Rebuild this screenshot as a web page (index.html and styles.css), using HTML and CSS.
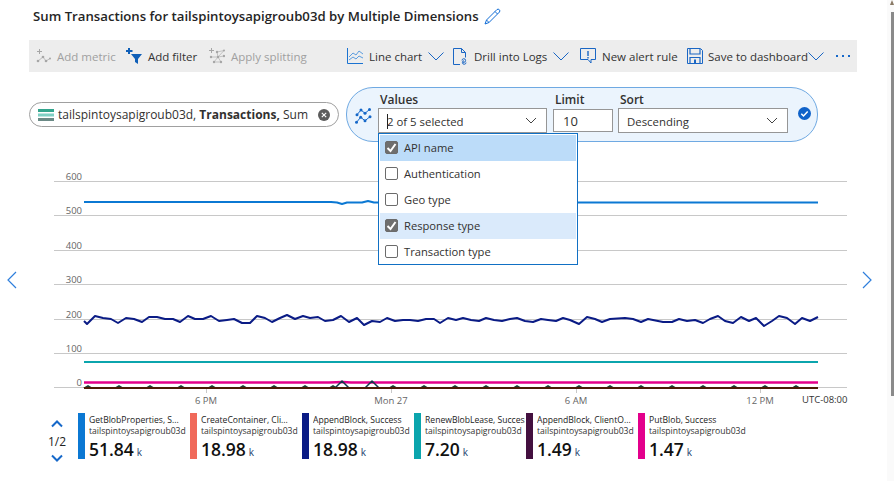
FILE: index.html
```html
<!DOCTYPE html>
<html lang="en">
<head>
    <meta charset="UTF-8">
    <title>Sum Transactions</title>
    <link rel="stylesheet" href="styles.css">
</head>
<body>
<div class="page">
    <div class="title-row">
        <h1>Sum Transactions for tailspintoysapigroub03d by Multiple Dimensions</h1>
        <svg class="pencil" width="17" height="17" viewBox="0 0 17 17"><path d="M13 1.500a1.800 1.800 0 0 1 2.500 2.500L5 14.500l-4 1.500 1.500-4zM11 3.500L13.500 6M2.500 12L5 14.500" fill="none" stroke="#0f6cd6" stroke-width="1"/></svg>
    </div>

    <div class="toolbar">
        <span class="tool off tool-metric">
            <svg width="15" height="15" viewBox="0 0 15 15"><g fill="#a6a6a6"><path d="M3 0h1v2h2v1H4v2H3V3H1V2h2z"/><circle cx="2" cy="12" r="1.300"/><circle cx="7" cy="8" r="1.300"/><circle cx="10" cy="12" r="1.300"/><circle cx="14" cy="9.500" r="1"/></g><path d="M2 12l5-4 3 4 4-2.500" stroke="#a6a6a6" fill="none" stroke-width=".7"/></svg>
            Add metric
        </span>
        <span class="tool tool-filter">
            <svg width="16" height="16" viewBox="0 0 16 16"><path d="M5 6h11l-4 5v5l-3-2v-3z" fill="#0f5fb8"/><path d="M2 0h2v2h2.500v2H4v2H2V4H0V2h2z" fill="#0f5fb8"/></svg>
            Add filter
        </span>
        <span class="tool off tool-split">
            <svg width="16" height="16" viewBox="0 0 16 16"><g fill="#a6a6a6"><path d="M2 0h1v2h2v1H3v2H2V3H0V2h2z"/><circle cx="8" cy="4" r="1.200"/><circle cx="15" cy="2.500" r="1"/><circle cx="2" cy="9" r="1.200"/><circle cx="9" cy="9" r="1.200"/><circle cx="15" cy="8" r="1.200"/><circle cx="5" cy="14" r="1.200"/><circle cx="12" cy="14" r="1.200"/></g><path d="M8 4l7-1.500M2 9h7l6-1M5 14h7M8 4l1 5 3 5M15 2.500L9 9l-4 5" stroke="#a6a6a6" stroke-width=".6" fill="none"/></svg>
            Apply splitting
        </span>
        <span class="tool tool-chart">
            <svg width="16" height="16" viewBox="0 0 16 16"><path d="M.5 0v15.500H16" fill="none" stroke="#1a73d1"/><path d="M2 9l4-4 3 2 3-4 4 3M2 12l4-3 3 2 3-3 4 2" fill="none" stroke="#4b93dc" stroke-width=".9"/></svg>
            Line chart
            <svg class="chev" width="16" height="9" viewBox="0 0 16 9"><path d="M.5.5L8 8 15.500.5" fill="none" stroke="#1a66c4"/></svg>
        </span>
        <span class="tool tool-logs">
            <svg width="15" height="17" viewBox="0 0 15 17"><path d="M7 16.500H.5V.5h8l4 4v5M8.500.5v4h4" fill="none" stroke="#1a66c4"/><path d="M9 12.500a1.800 1.800 0 1 1 2 1.800h-1M13 14.500a1.800 1.800 0 1 1-2-1.800" fill="none" stroke="#1a66c4"/></svg>
            Drill into Logs
            <svg class="chev" width="16" height="9" viewBox="0 0 16 9"><path d="M.5.5L8 8 15.500.5" fill="none" stroke="#1a66c4"/></svg>
        </span>
        <span class="tool tool-alert">
            <svg width="16" height="16" viewBox="0 0 16 16"><path d="M.5.500h15v11H11v3.500L8 11.500H.5z" fill="none" stroke="#1a66c4"/><path d="M7.300 3h1.400v5H7.300zM7.300 9h1.400v1.400H7.300z" fill="#1a66c4"/></svg>
            New alert rule
        </span>
        <span class="tool tool-save">
            <svg width="16" height="16" viewBox="0 0 16 16"><path d="M.5.500h13l2 2v13H.5z" fill="none" stroke="#1a66c4"/><path d="M3 1v5h10V1M3 15V9.500h10V15" fill="none" stroke="#1a66c4" stroke-width="1.200"/><path d="M7 11.500h2V15H7z" fill="#1a66c4"/></svg>
            <span class="save-label">Save to dashboard</span><svg class="chev" width="16" height="9" viewBox="0 0 16 9"><path d="M.5.5L8 8 15.500.5" fill="none" stroke="#1a66c4"/></svg>
        </span>
        <span class="more"><i></i><i></i><i></i></span>
    </div>

    <div class="filters">
        <div class="metric-pill">
            <svg width="16" height="12" viewBox="0 0 16 12"><rect width="16" height="3" fill="#33a58d"/><rect y="4.500" width="16" height="3" fill="#7fd0c4"/><rect y="9" width="16" height="3" fill="#6b8a86"/></svg>
            <span class="pill-text">tailspintoysapigroub03d, <b>Transactions,</b> Sum</span>
            <svg width="12" height="12" viewBox="0 0 12 12"><circle cx="6" cy="6" r="6" fill="#5c5c5c"/><path d="M3.800 3.800l4.400 4.400M8.200 3.800L3.800 8.200" stroke="#fff" stroke-width="1.100"/></svg>
        </div>
        <div class="split-pill">
            <svg class="split-icon" width="17" height="16" viewBox="0 0 17 16"><g fill="#1668c9"><circle cx="2" cy="6.700" r="1.500"/><circle cx="6" cy="2" r="1.500"/><circle cx="10" cy="5.300" r="1.500"/><circle cx="14.500" cy="1.500" r="1.500"/><circle cx="1.500" cy="14.300" r="1.500"/><circle cx="5.700" cy="9.300" r="1.500"/><circle cx="10" cy="12.700" r="1.500"/><circle cx="15" cy="8.700" r="1.500"/></g><path d="M2 6.700L6 2l4 3.300 4.500-3.800M1.500 14.300l4.200-5 4.300 3.400 5-4" fill="none" stroke="#1668c9"/></svg>
            <div class="field field-values">
                <label>Values</label>
                <div class="select"><span class="caret"></span>2 of 5 selected<svg class="select-chev" width="12" height="7" viewBox="0 0 12 7"><path d="M1 1l5 5 5-5" fill="none" stroke="#444"/></svg></div>
            </div>
            <div class="field field-limit">
                <label>Limit</label>
                <div class="limit">10</div>
            </div>
            <div class="field field-sort">
                <label>Sort</label>
                <div class="select">Descending<svg class="select-chev" width="12" height="7" viewBox="0 0 12 7"><path d="M1 1l5 5 5-5" fill="none" stroke="#444"/></svg></div>
            </div>
            <svg class="done" width="13" height="13" viewBox="0 0 13 13"><circle cx="6.500" cy="6.500" r="6.500" fill="#0f62c9"/><path d="M3.300 6.800l2.200 2.200 4.200-4.500" fill="none" stroke="#fff" stroke-width="1.500"/></svg>

            <ul class="dropdown">
                <li class="on strong"><span class="box checked"><svg width="13" height="13" viewBox="0 0 13 13"><path d="M2.500 7l3 3 5-7" fill="none" stroke="#fff" stroke-width="2"/></svg></span>API name</li>
                <li><span class="box"></span>Authentication</li>
                <li><span class="box"></span>Geo type</li>
                <li class="on"><span class="box checked"><svg width="13" height="13" viewBox="0 0 13 13"><path d="M2.500 7l3 3 5-7" fill="none" stroke="#fff" stroke-width="2"/></svg></span>Response type</li>
                <li><span class="box"></span>Transaction type</li>
            </ul>
        </div>
    </div>

    <div class="chart-wrap">
        <svg class="arrow" width="12" height="18" viewBox="0 0 12 18"><path d="M10 1L2 9l8 8" fill="none" stroke="#2f7fdc" stroke-width="1.200"/></svg>
        <div class="chart">
            <svg width="810" height="228" viewBox="0 0 810 228">
                <g class="grid">
                    <path d="M15 16.500h793M15 50.500h793M15 85.500h793M15 119.500h793M15 154.500h793M15 188.500h793M15 222.500h793"/>
                    <path d="M167.500 223v5M352.500 223v5M537.500 223v5M721.500 223v5"/>
                </g>
                <g class="ticks">
                    <text x="43" y="15" text-anchor="end">600</text>
                    <text x="43" y="49" text-anchor="end">500</text>
                    <text x="43" y="84" text-anchor="end">400</text>
                    <text x="43" y="118" text-anchor="end">300</text>
                    <text x="43" y="153" text-anchor="end">200</text>
                    <text x="43" y="187" text-anchor="end">100</text>
                    <text x="43" y="221" text-anchor="end">0</text>
                    <text x="167" y="239" text-anchor="middle">6 PM</text>
                    <text x="352" y="239" text-anchor="middle">Mon 27</text>
                    <text x="537" y="239" text-anchor="middle">6 AM</text>
                    <text x="721" y="239" text-anchor="middle">12 PM</text>
                </g>
                <path class="s1" d="M45 37H292l6 .5 5 1.500 5-1.500H323l6-1.500 6 1.500H779"/>
                <polyline class="s3" points="45,156 48,159 56,151 64,153 72,154 79,158 87,153 95,154 103,157 110,152 118,152 126,154 134,154 141,157 149,151 156,154 164,154 172,151 180,156 188,155 195,154 203,158 211,158 218,151 226,153 233,157 241,153 248,150 256,154 264,151 271,153 279,152 286,156 294,155 302,151 310,157 318,153 325,160 333,156 341,157 348,153 356,156 364,155 371,155 379,156 387,154 395,154 401,158 409,153 417,155 424,153 432,155 440,156 447,153 455,155 463,156 471,154 478,153 486,156 494,157 502,154 509,155 517,156 524,153 531,155 540,159 548,152 556,154 563,157 571,154 586,153 594,154 602,157 609,154 624,157 633,157 640,154 648,156 656,155 664,158 671,154 679,151 686,156 694,158 702,152 710,156 717,153 725,161 733,156 740,151 748,153 756,159 763,153 771,156 779,152"/>
                <path class="s4" d="M45 197H779"/>
                <path class="s6" d="M45 217.500H290l14-.5 8 .5H779"/>
                <path class="bumps" d="M44 223l5-3 5 3zm31 0l5-3 5 3zm31 0l5-3 5 3zm31 0l5-3 5 3zm31 0l5-3 5 3zm31 0l5-3 5 3zm31 0l5-3 5 3zm31 0l5-3 5 3zm28 0l5-3 5 3zm60 0l5-3 5 3zm31 0l5-3 5 3zm31 0l5-3 5 3zm31 0l5-3 5 3zm31 0l5-3 5 3zm31 0l5-3 5 3zm31 0l5-3 5 3zm31 0l5-3 5 3zm31 0l5-3 5 3zm31 0l5-3 5 3zm31 0l5-3 5 3zm31 0l5-3 5 3zm31 0l5-3 5 3zm31 0l5-3 5 3z"/>
                <path class="s5" d="M296 223l7-7 7 7M326 223l7-7 7 7"/>
                <path class="s2" d="M45 223H779"/>
            </svg>
        </div>
        <svg class="arrow" width="12" height="18" viewBox="0 0 12 18"><path d="M2 1l8 8-8 8" fill="none" stroke="#2f7fdc" stroke-width="1.200"/></svg>
    </div>
    <div class="utc">UTC-08:00</div>

    <div class="legend">
        <div class="pager">
            <svg width="12" height="8" viewBox="0 0 12 8"><path d="M1 6.500l5-5 5 5" fill="none" stroke="#1668c9" stroke-width="2"/></svg>
            <span>1/2</span>
            <svg width="12" height="8" viewBox="0 0 12 8"><path d="M1 1.500l5 5 5-5" fill="none" stroke="#1668c9" stroke-width="2"/></svg>
        </div>
        <div class="item c1"><div class="name">GetBlobProperties, S...</div><div class="res">tailspintoysapigroub03d</div><div class="val">51.84<small>k</small></div></div>
        <div class="item c2"><div class="name">CreateContainer, Cli...</div><div class="res">tailspintoysapigroub03d</div><div class="val">18.98<small>k</small></div></div>
        <div class="item c3"><div class="name">AppendBlock, Success</div><div class="res">tailspintoysapigroub03d</div><div class="val">18.98<small>k</small></div></div>
        <div class="item c4"><div class="name">RenewBlobLease, Success</div><div class="res">tailspintoysapigroub03d</div><div class="val">7.20<small>k</small></div></div>
        <div class="item c5"><div class="name">AppendBlock, ClientO...</div><div class="res">tailspintoysapigroub03d</div><div class="val">1.49<small>k</small></div></div>
        <div class="item c6"><div class="name">PutBlob, Success</div><div class="res">tailspintoysapigroub03d</div><div class="val">1.47<small>k</small></div></div>
    </div>
</div>
<div class="scrollbar"><span class="scroll-up"></span><span class="thumb"></span></div>
</body>
</html>
```

FILE: styles.css
```css
/* Page */
html, body {
    margin: 0;
    height: 481px;
    overflow: hidden;
    background: #fff;
}

body {
    display: flex;
    font-family: "Open Sans", sans-serif;
    font-size: 12px;
    color: #323130;
}

.page {
    width: 887px;
    flex: none;
}

.scrollbar {
    flex: 1;
    display: flex;
    flex-direction: column;
    align-items: flex-end;
    background: #fafafa;
}

.scroll-up {
    width: 0;
    height: 0;
    border-left: 2px solid transparent;
    border-right: 2px solid transparent;
    border-bottom: 5px solid #8a7a66;
}

.thumb {
    width: 3px;
    height: 384px;
    margin-top: 7px;
    background: #8a8a8a;
}

/* Title */
.title-row {
    display: flex;
    align-items: center;
    gap: 5px;
    height: 32px;
    padding-left: 33px;
}

h1 {
    margin: 0;
    font-size: 13.2px;
    font-weight: 600;
    color: #252525;
}

/* Toolbar */
.toolbar {
    display: flex;
    align-items: center;
    height: 32px;
    margin: 8px 0 0 29px;
    width: 828px;
    background: #ededed;
    font-size: 11.5px;
    white-space: nowrap;
}

.tool {
    display: flex;
    align-items: center;
    gap: 6px;
    color: #333;
}

.tool.off {
    color: #a0a0a0;
}

.tool-metric { margin-left: 7px; width: 90px; }
.tool-filter { width: 83px; }
.tool-split { width: 138px; }
.tool-chart { width: 106px; }
.tool-logs { width: 127px; }
.tool-alert { width: 107px; }
.tool-save { width: 149px; }

.tool-save {
    gap: 0;
}

.save-label {
    margin-left: 5px;
}

.more {
    display: flex;
    gap: 4px;
}

.more i {
    width: 2px;
    height: 2px;
    background: #1668c9;
}

/* Metric and split pills */
.filters {
    display: flex;
    align-items: center;
    margin: 15px 0 23px 29px;
    gap: 7px;
}

.metric-pill {
    display: flex;
    align-items: center;
    width: 310px;
    height: 25px;
    box-sizing: border-box;
    padding: 0 8px;
    border: 1px solid #a0a0a0;
    border-radius: 13px;
    gap: 4px;
}

.pill-text {
    flex: 1;
    white-space: nowrap;
}

.split-pill {
    position: relative;
    display: flex;
    align-items: flex-end;
    width: 472px;
    height: 55px;
    box-sizing: border-box;
    padding: 0 0 8px 8px;
    background: #ebf4fd;
    border: 1px solid #6fa9e2;
    border-radius: 27px;
}

.split-icon {
    margin: 0 6px 9px 0;
}

.field label {
    display: block;
    font-weight: 600;
    color: #323130;
    margin-left: 2px;
    line-height: 17px;
}

.select {
    position: relative;
    display: flex;
    align-items: center;
    height: 25px;
    box-sizing: border-box;
    padding: 2px 0 0 8px;
    background: #fff;
    border: 1px solid #969696;
    font-size: 11.4px;
}

.select-chev {
    position: absolute;
    right: 9px;
    top: 8px;
}

.caret {
    width: 1px;
    height: 15px;
    background: #222;
    margin-right: -1px;
}

.field-values { width: 169px; margin-right: 6px; }
.field-limit { width: 60px; margin-right: 5px; }
.field-sort { width: 170px; }

.limit {
    display: flex;
    align-items: center;
    height: 23px;
    box-sizing: border-box;
    margin: 1px 0;
    padding-left: 9px;
    background: #fff;
    border: 1px solid #969696;
    font-size: 13px;
}

.done {
    margin: 0 0 13px 10px;
}

/* Dropdown over the chart */
.dropdown {
    position: absolute;
    left: 31px;
    top: 45px;
    z-index: 2;
    width: 200px;
    height: 132px;
    box-sizing: border-box;
    margin: 0;
    padding: 1px;
    overflow: hidden;
    list-style: none;
    background: #fff;
    border: 1px solid #1170c4;
    font-size: 11.2px;
}

.dropdown li {
    display: flex;
    align-items: center;
    gap: 6px;
    height: 26px;
    box-sizing: border-box;
    padding: 0 0 1px 5px;
}

.dropdown li.on {
    background: #daeafb;
}

.dropdown li.strong {
    background: #bcdcf9;
}

.box {
    display: flex;
    box-sizing: border-box;
    width: 13px;
    height: 13px;
    border: 1px solid #6b6b6b;
    border-radius: 2px;
    background: #fff;
}

.box.checked {
    background: #6e6e6e;
}

.box svg {
    margin: -1px;
    flex: none;
}

/* Chart */
.chart-wrap {
    display: flex;
    align-items: flex-start;
    height: 228px;
    padding-left: 6px;
}

.arrow {
    margin-top: 106px;
}

.chart {
    width: 810px;
    margin: 0 12px 0 21px;
}

.chart svg {
    display: block;
    overflow: visible;
}

.grid path {
    fill: none;
    stroke: #c8c8c8;
    stroke-width: 1;
}

.ticks text {
    font-family: "Open Sans", sans-serif;
    font-size: 9.5px;
    fill: #666;
}

.s1, .s2, .s3, .s4, .s5, .s6 {
    fill: none;
    stroke-linejoin: round;
}

.s1 { stroke: #0b78d3; stroke-width: 2; }
.s2 { stroke: #4a1c05; stroke-width: 2; }
.s3 { stroke: #0a1b85; stroke-width: 2; }
.s4 { stroke: #0ba5ad; stroke-width: 2; }
.s5 { stroke: #12374a; stroke-width: 1.500; }
.s6 { stroke: #e3008c; stroke-width: 2.500; }

.bumps {
    fill: #173f33;
}

.utc {
    margin-left: 802px;
    height: 14px;
    font-size: 9.5px;
    line-height: 14px;
    color: #333;
}

/* Legend */
.legend {
    display: flex;
    margin: 6px 0 0 48px;
}

.pager {
    display: flex;
    flex-direction: column;
    align-items: center;
    justify-content: space-between;
    width: 18px;
    height: 42px;
    margin: 7px 12px 0 0;
    color: #222;
    font-size: 12px;
}

.item {
    box-sizing: border-box;
    width: 112px;
    padding-left: 4px;
    border-left: 7px solid;
    height: 46px;
    white-space: nowrap;
    color: #222;
    font-size: 8.6px;
    line-height: 11px;
}

.name {
    padding-top: 2px;
    width: 100px;
    overflow: hidden;
}

.res {
    color: #333;
}

.val {
    font-size: 17.5px;
    font-weight: 600;
    line-height: 24px;
    color: #111;
}

.val small {
    font-size: 10px;
    font-weight: 400;
    margin-left: 3px;
    color: #1b3a6b;
}

.c1 { border-color: #0b78d3; }
.c2 { border-color: #f0695a; }
.c3 { border-color: #0a1b85; }
.c4 { border-color: #0ba5ad; }
.c5 { border-color: #43103f; }
.c6 { border-color: #e3008c; }
```
